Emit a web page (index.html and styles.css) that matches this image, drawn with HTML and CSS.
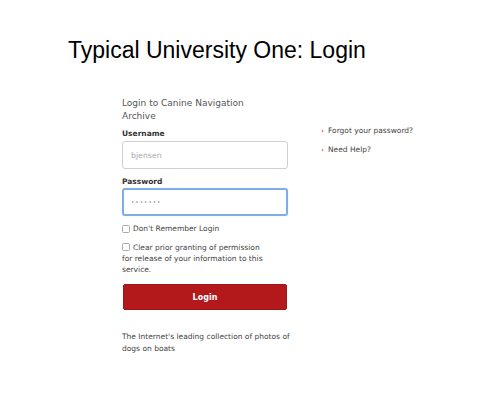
FILE: index.html
```html
<!DOCTYPE html>
<html>
<head>
<meta charset="utf-8">
<link rel="stylesheet" href="styles.css">
</head>
<body>
<h1 class="title">Typical University One: Login</h1>
<div class="layout">
  <form class="login">
    <p class="intro">Login to Canine Navigation<br>Archive</p>
    <label class="field-label">Username</label>
    <div class="input"><span class="placeholder">bjensen</span></div>
    <label class="field-label pw">Password</label>
    <div class="input focus"><span class="dots">•••••••</span></div>
    <div class="check"><span class="box"></span><span>Don't Remember Login</span></div>
    <div class="check multi"><span class="box"></span>Clear prior granting of permission for release of your information to this service.</div>
    <div class="button">Login</div>
    <p class="footer">The Internet's leading collection of photos of dogs on boats</p>
  </form>
  <ul class="links">
    <li><span class="chev">›</span>Forgot your password?</li>
    <li><span class="chev">›</span>Need Help?</li>
  </ul>
</div>
</body>
</html>
```

FILE: styles.css
```css
html, body { margin: 0; padding: 0; background: #fff; }
body { width: 500px; height: 404px; overflow: hidden; font-family: "DejaVu Sans", Verdana, sans-serif; color: #444; }
.title {
  font-family: "Liberation Sans", Arial, sans-serif;
  font-weight: normal;
  font-size: 23px;
  color: #000;
  margin: 0;
  padding: 37px 0 0 68px;
  line-height: 27px;
}
.layout { display: flex; padding: 33px 0 0 122px; }
.login { width: 166px; display: flex; flex-direction: column; }
.intro { margin: 0; font-size: 9px; line-height: 13px; color: #555; }
.field-label { font-weight: bold; font-size: 7.5px; color: #333; margin-top: 6px; line-height: 10px; }
.field-label.pw { margin-top: 8px; }
.input {
  height: 28px; box-sizing: border-box; border: 1px solid #d0d0d0; border-radius: 3px;
  margin-top: 2px; display: flex; align-items: center; padding-left: 8px; font-size: 7.8px;
}
.input.focus { border: 2px solid #7eaee9; padding-left: 7px; margin-top: 1px; box-shadow: 0 0 1px #a9c8f0; }
.placeholder { color: #aaa; }
.dots { color: #8a8a8a; font-size: 5.5px; letter-spacing: 1.1px; }
.check { font-size: 7.5px; line-height: 11px; color: #444; margin-top: 7px; display: flex; align-items: center; gap: 3px; }
.check.multi { display: block; margin-top: 8px; width: 148px; }
.box { display: inline-block; width: 6px; height: 6px; border: 1px solid #aaa; border-radius: 1.5px; vertical-align: -1px; }
.check.multi .box { margin-right: 3px; }
.button {
  margin-top: 9px; height: 26px; background: #b3191b; border-radius: 2px; color: #fff;
  font-weight: bold; font-size: 8px; display: flex; align-items: center; justify-content: center;
  border: 1px solid #a01416; box-sizing: border-box; margin-left: 1px; margin-right: 1px;
}
.footer { margin: 21px 0 0; font-size: 7.5px; line-height: 12px; color: #444; width: 176px; }
.links { list-style: none; margin: 0; padding: 28px 0 0 33px; font-size: 7.5px; color: #444; }
.links li { line-height: 12px; margin-bottom: 7px; }
.chev { color: #b3191b; margin-right: 4px; }
```
